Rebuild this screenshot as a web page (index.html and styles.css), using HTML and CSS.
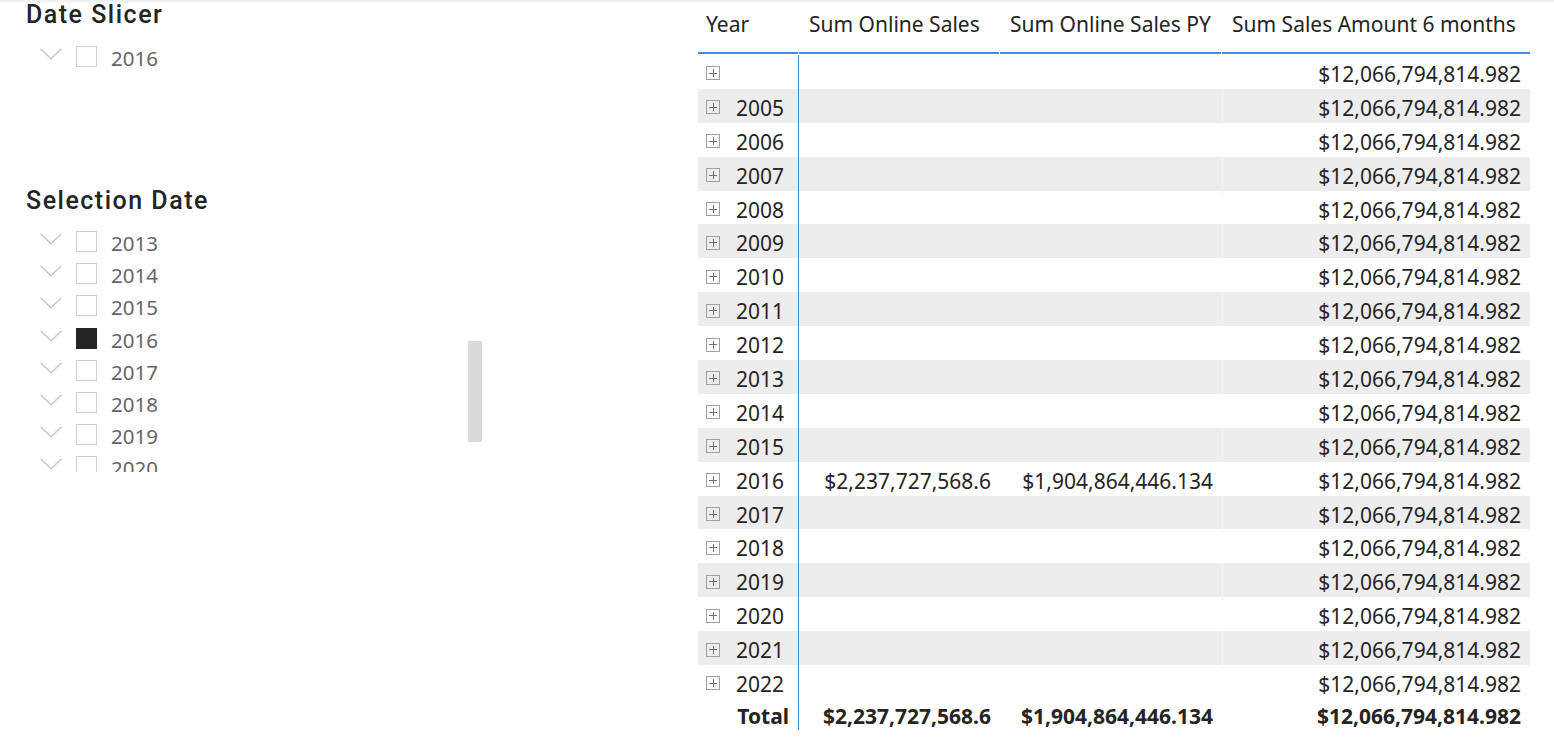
FILE: index.html
```html
<!DOCTYPE html>
<html>
<head>
<meta charset="utf-8">
<link rel="stylesheet" href="styles.css">
</head>
<body>
<div class="topshade"></div>
<div class="page">
  <div class="left">
    <section class="slicer slicer-one">
      <h2 class="title">Date Slicer</h2>
      <div class="items">
        <div class="item"><svg class="chev" width="22" height="12" viewBox="0 0 22 12"><polyline points="0.5,0.8 11,10.8 21.5,0.8" fill="none" stroke="#c8c6c4" stroke-width="1.4"/></svg><span class="box"></span><span class="lbl">2016</span></div>
      </div>
    </section>
    <section class="slicer slicer-two">
      <h2 class="title">Selection Date</h2>
      <div class="listwrap">
        <div class="items clip">
          <div class="item"><svg class="chev" width="22" height="12" viewBox="0 0 22 12"><polyline points="0.5,0.8 11,10.8 21.5,0.8" fill="none" stroke="#c8c6c4" stroke-width="1.4"/></svg><span class="box"></span><span class="lbl">2013</span></div>
          <div class="item"><svg class="chev" width="22" height="12" viewBox="0 0 22 12"><polyline points="0.5,0.8 11,10.8 21.5,0.8" fill="none" stroke="#c8c6c4" stroke-width="1.4"/></svg><span class="box"></span><span class="lbl">2014</span></div>
          <div class="item"><svg class="chev" width="22" height="12" viewBox="0 0 22 12"><polyline points="0.5,0.8 11,10.8 21.5,0.8" fill="none" stroke="#c8c6c4" stroke-width="1.4"/></svg><span class="box"></span><span class="lbl">2015</span></div>
          <div class="item"><svg class="chev" width="22" height="12" viewBox="0 0 22 12"><polyline points="0.5,0.8 11,10.8 21.5,0.8" fill="none" stroke="#c8c6c4" stroke-width="1.4"/></svg><span class="box checked"></span><span class="lbl">2016</span></div>
          <div class="item"><svg class="chev" width="22" height="12" viewBox="0 0 22 12"><polyline points="0.5,0.8 11,10.8 21.5,0.8" fill="none" stroke="#c8c6c4" stroke-width="1.4"/></svg><span class="box"></span><span class="lbl">2017</span></div>
          <div class="item"><svg class="chev" width="22" height="12" viewBox="0 0 22 12"><polyline points="0.5,0.8 11,10.8 21.5,0.8" fill="none" stroke="#c8c6c4" stroke-width="1.4"/></svg><span class="box"></span><span class="lbl">2018</span></div>
          <div class="item"><svg class="chev" width="22" height="12" viewBox="0 0 22 12"><polyline points="0.5,0.8 11,10.8 21.5,0.8" fill="none" stroke="#c8c6c4" stroke-width="1.4"/></svg><span class="box"></span><span class="lbl">2019</span></div>
          <div class="item"><svg class="chev" width="22" height="12" viewBox="0 0 22 12"><polyline points="0.5,0.8 11,10.8 21.5,0.8" fill="none" stroke="#c8c6c4" stroke-width="1.4"/></svg><span class="box"></span><span class="lbl">2020</span></div>
        </div>
        <div class="thumb"></div>
      </div>
    </section>
  </div>

  <div class="matrix">
    <div class="hrow">
      <div class="hc c1">Year</div>
      <div class="hc">Sum Online Sales</div>
      <div class="hc">Sum Online Sales PY</div>
      <div class="hc last">Sum Sales Amount 6 months</div>
    </div>
    <div class="row"><div class="c c1"><span class="exp"></span></div><div class="c"></div><div class="c"></div><div class="c">$12,066,794,814.982</div></div>
    <div class="row alt"><div class="c c1"><span class="exp"></span>2005</div><div class="c"></div><div class="c"></div><div class="c">$12,066,794,814.982</div></div>
    <div class="row"><div class="c c1"><span class="exp"></span>2006</div><div class="c"></div><div class="c"></div><div class="c">$12,066,794,814.982</div></div>
    <div class="row alt"><div class="c c1"><span class="exp"></span>2007</div><div class="c"></div><div class="c"></div><div class="c">$12,066,794,814.982</div></div>
    <div class="row"><div class="c c1"><span class="exp"></span>2008</div><div class="c"></div><div class="c"></div><div class="c">$12,066,794,814.982</div></div>
    <div class="row alt"><div class="c c1"><span class="exp"></span>2009</div><div class="c"></div><div class="c"></div><div class="c">$12,066,794,814.982</div></div>
    <div class="row"><div class="c c1"><span class="exp"></span>2010</div><div class="c"></div><div class="c"></div><div class="c">$12,066,794,814.982</div></div>
    <div class="row alt"><div class="c c1"><span class="exp"></span>2011</div><div class="c"></div><div class="c"></div><div class="c">$12,066,794,814.982</div></div>
    <div class="row"><div class="c c1"><span class="exp"></span>2012</div><div class="c"></div><div class="c"></div><div class="c">$12,066,794,814.982</div></div>
    <div class="row alt"><div class="c c1"><span class="exp"></span>2013</div><div class="c"></div><div class="c"></div><div class="c">$12,066,794,814.982</div></div>
    <div class="row"><div class="c c1"><span class="exp"></span>2014</div><div class="c"></div><div class="c"></div><div class="c">$12,066,794,814.982</div></div>
    <div class="row alt"><div class="c c1"><span class="exp"></span>2015</div><div class="c"></div><div class="c"></div><div class="c">$12,066,794,814.982</div></div>
    <div class="row"><div class="c c1"><span class="exp"></span>2016</div><div class="c">$2,237,727,568.6</div><div class="c">$1,904,864,446.134</div><div class="c">$12,066,794,814.982</div></div>
    <div class="row alt"><div class="c c1"><span class="exp"></span>2017</div><div class="c"></div><div class="c"></div><div class="c">$12,066,794,814.982</div></div>
    <div class="row"><div class="c c1"><span class="exp"></span>2018</div><div class="c"></div><div class="c"></div><div class="c">$12,066,794,814.982</div></div>
    <div class="row alt"><div class="c c1"><span class="exp"></span>2019</div><div class="c"></div><div class="c"></div><div class="c">$12,066,794,814.982</div></div>
    <div class="row"><div class="c c1"><span class="exp"></span>2020</div><div class="c"></div><div class="c"></div><div class="c">$12,066,794,814.982</div></div>
    <div class="row alt"><div class="c c1"><span class="exp"></span>2021</div><div class="c"></div><div class="c"></div><div class="c">$12,066,794,814.982</div></div>
    <div class="row"><div class="c c1"><span class="exp"></span>2022</div><div class="c"></div><div class="c"></div><div class="c">$12,066,794,814.982</div></div>
    <div class="row total"><div class="c c1 tl">Total</div><div class="c">$2,237,727,568.6</div><div class="c">$1,904,864,446.134</div><div class="c">$12,066,794,814.982</div></div>
  </div>
</div>
</body>
</html>
```

FILE: styles.css
```css
* { box-sizing: border-box; }
html, body { margin: 0; padding: 0; background: #fff; }
body {
  width: 1554px;
  height: 741px;
  overflow: hidden;
  position: relative;
  font-family: "Noto Sans", "Open Sans", sans-serif;
  color: #252423;
}
.topshade {
  position: absolute;
  left: 0; top: 0; right: 0; height: 4px;
  background: linear-gradient(#ececec, rgba(255,255,255,0));
}
.page {
  display: flex;
  align-items: flex-start;
}
.left {
  width: 698px;
  flex: none;
  display: flex;
  flex-direction: column;
}
.slicer { padding-left: 26px; }
.slicer-one { height: 186px; }
.title {
  margin: 0;
  font-family: "Roboto", "DejaVu Sans", sans-serif;
  font-weight: 500;
  font-size: 25px;
  line-height: 30px;
  color: #252423;
  letter-spacing: 1.5px;
}
.items {
  display: flex;
  flex-direction: column;
  padding-left: 14px;
}
.slicer-one .items { padding-top: 12px; }
.item {
  display: flex;
  align-items: center;
  height: 32.2px;
  flex: none;
}
.chev { flex: none; margin-top: -8px; }
.box {
  flex: none;
  width: 21px;
  height: 21px;
  border: 1.5px solid #cfcfcf;
  margin-left: 14px;
  margin-top: -3px;
}
.box.checked { background: #252423; border-color: #252423; }
.lbl {
  margin-left: 14px;
  font-family: "Noto Sans", "Open Sans", sans-serif;
  font-size: 20.5px;
  color: #666666;
}
.listwrap {
  position: relative;
  display: flex;
  padding-top: 11px;
}
.clip {
  width: 400px;
  height: 245px;
  overflow: hidden;
}
.thumb {
  position: absolute;
  left: 442px;
  top: 125px;
  width: 14px;
  height: 101px;
  background: #d9d9d9;
}

.matrix {
  width: 832px;
  flex: none;
  display: flex;
  flex-direction: column;
}
.hrow, .row {
  display: grid;
  grid-template-columns: 101px 201px 222px 308px;
}
.hc {
  height: 55px;
  padding: 8px 0 0 10px;
  font-size: 21px;
  line-height: 32px;
  white-space: nowrap;
  background: linear-gradient(#3a8ee6, #3a8ee6) no-repeat left 0 top 52px / calc(100% - 1px) 2px;
}
.hc.c1 { padding-left: 8px; }
.hc.last { background-size: 100% 2px; }
.row { height: 33.9px; }
.row.total { height: 31px; }
.row.alt { background: #ededed; }
.c {
  font-size: 21px;
  line-height: 33.9px;
  padding-top: 3px;
  text-align: right;
  padding-right: 9px;
  white-space: nowrap;
}
.row.total .c { line-height: 28px; }
.row.alt .c + .c + .c + .c { box-shadow: inset 1px 0 0 #f4f4f4; }
.c.c1 {
  text-align: left;
  padding: 3px 0 0 8px;
  border-right: 1px solid #3a8ee6;
  display: flex;
  align-items: center;
}
.exp {
  width: 14px;
  height: 14px;
  border: 1px solid #a0a0a0;
  margin-right: 16px;
  flex: none;
  background:
    linear-gradient(#707070, #707070) center / 8px 1px no-repeat,
    linear-gradient(#707070, #707070) center / 1px 8px no-repeat;
  margin-top: -3px;
}
.row.total .c { font-weight: 700; }
.c.tl { justify-content: flex-end; padding-right: 9px; }
```
